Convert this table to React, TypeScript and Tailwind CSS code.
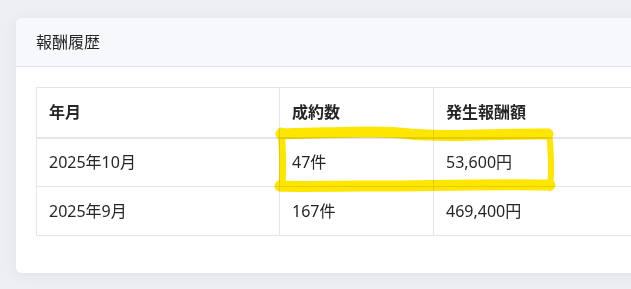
import React from "react";

const rows = [
  { month: "2025年10月", count: "47件", amount: "53,600円" },
  { month: "2025年9月", count: "167件", amount: "469,400円" },
];

export default function App() {
  return (
    <div
      className="relative h-[289px] w-[631px] overflow-hidden bg-[#eeeff3] text-[#262626]"
      style={{ fontFamily: '"Noto Sans", "Noto Sans CJK JP", sans-serif' }}
    >
      <div className="ml-4 mt-[18px] w-[720px] overflow-hidden rounded-md bg-white shadow-[0_2px_14px_rgba(40,45,70,0.07)]">
        <div className="flex h-[49px] items-center border-b border-[#e2e4ee] bg-[#f7f8fb] px-5 text-[16px] leading-none">
          報酬履歴
        </div>
        <div className="px-5 pb-[37px] pt-5">
          <table className="w-full border-collapse text-[16px]">
            <thead>
              <tr className="h-[50px]">
                <th className="w-[243px] border border-b-2 border-[#e2e4ee] px-[12px] text-left font-bold">年月</th>
                <th className="w-[154px] border border-b-2 border-[#e2e4ee] px-[12px] text-left font-bold">成約数</th>
                <th className="border border-b-2 border-[#e2e4ee] px-[12px] text-left font-bold">発生報酬額</th>
              </tr>
            </thead>
            <tbody>
              {rows.map((r) => (
                <tr key={r.month} className="h-[49px]">
                  <td className="border border-[#e2e4ee] px-[12px]">{r.month}</td>
                  <td className="border border-[#e2e4ee] px-[12px]">{r.count}</td>
                  <td className="border border-[#e2e4ee] px-[12px]">{r.amount}</td>
                </tr>
              ))}
            </tbody>
          </table>
        </div>
      </div>

      {/* highlighter marks drawn over the October row */}
      <svg
        className="pointer-events-none absolute left-0 top-0 mix-blend-multiply"
        width="631"
        height="289"
        viewBox="0 0 631 289"
        fill="none"
        stroke="#ffe600"
        strokeLinecap="round"
        strokeLinejoin="round"
      >
        <path d="M281 134 C 330 133 380 130 410 134 C 450 138 500 133 548 134" strokeWidth="11" />
        <path d="M549 132 C 551 150 552 170 550 188" strokeWidth="6" />
        <path d="M550 185 C 480 184 420 186 360 186 C 330 186 300 187 280 186" strokeWidth="11" />
        <path d="M281 131 C 283 150 283 170 282 188" strokeWidth="7" />
      </svg>
    </div>
  );
}
